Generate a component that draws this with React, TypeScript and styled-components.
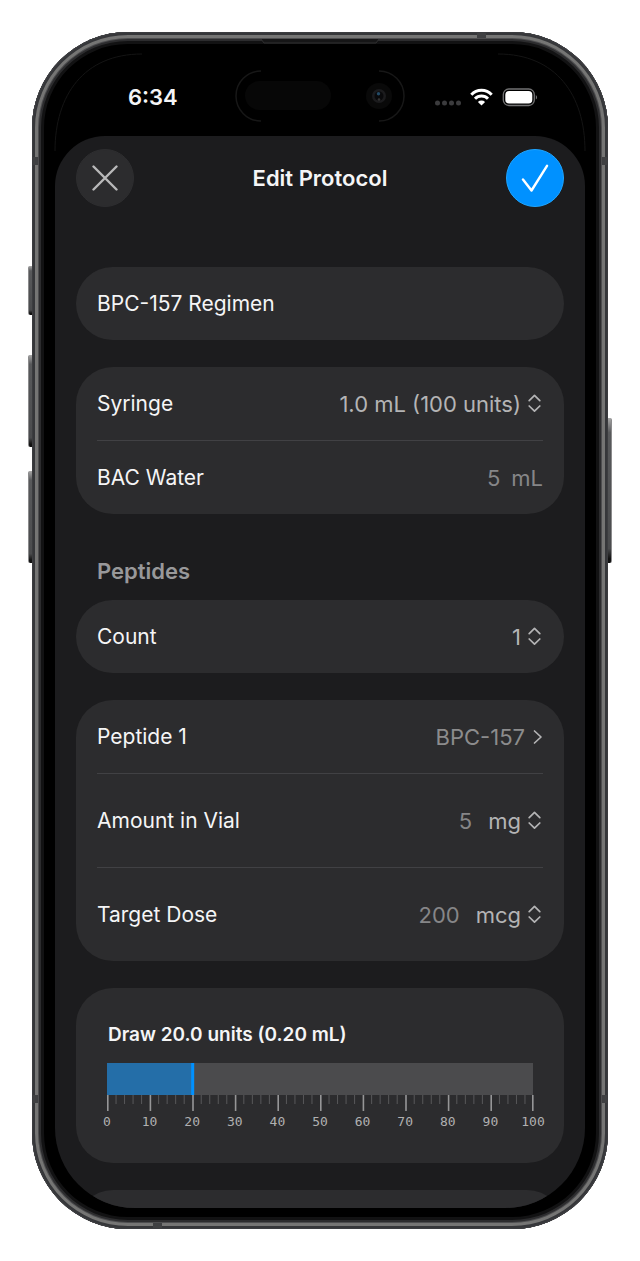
import React from "react";
import styled, { createGlobalStyle } from "styled-components";

const GlobalStyle = createGlobalStyle`
  * { box-sizing: border-box; }
  body {
    margin: 0;
    background: #ffffff;
    font-family: Inter, "Liberation Sans", sans-serif;
    font-size: 22px;
    line-height: 28px;
    color: #f5f5f6;
  }
`;

const Page = styled.div`
  padding: 32px 32px 33px;
`;

const Phone = styled.div`
  position: relative;
  padding: 0 23px 21px;
  background: #000;
  border-radius: 96px;
  box-shadow:
    inset 0 0 0 1px #3c3d40,
    inset 0 0 0 3px #36373a,
    inset 0 0 0 6px #757574,
    inset 0 0 0 7px #4d4d4f,
    inset 0 0 0 9px #2c2c2e,
    inset 0 0 0 12px #121213;
`;

const SideButton = styled.span<{ $side: "left" | "right"; $top: number; $length: number }>`
  position: absolute;
  ${(p) => p.$side}: -4px;
  top: ${(p) => p.$top}px;
  width: 4px;
  height: ${(p) => p.$length}px;
  border-radius: ${(p) => (p.$side === "left" ? "2px 0 0 2px" : "0 2px 2px 0")};
  background: linear-gradient(#a8a8a8, #58595b 10%, #4a4b4d 90%, #111 97%);
  border-${(p) => p.$side}: 1px solid #8b8b8c;
`;

const AntennaBand = styled.span<{ $edge: "left" | "right" | "top" | "bottom"; $at: number }>`
  position: absolute;
  ${(p) => p.$edge}: 1px;
  ${(p) =>
    p.$edge === "left" || p.$edge === "right"
      ? `top: ${p.$at}px; width: 5px; height: 8px;`
      : `left: ${p.$at}px; width: 9px; height: 5px;`}
  background: #3f4042;
`;

const Earpiece = styled.svg`
  position: absolute;
  top: 7px;
  left: 50%;
  transform: translateX(-50%);
`;

const CornerGlint = styled.svg<{ $side: "left" | "right" }>`
  position: absolute;
  top: 21px;
  ${(p) => p.$side}: 22px;
  ${(p) => p.$side === "right" && "transform: scaleX(-1);"}
`;

const StatusBar = styled.header`
  display: grid;
  grid-template-columns: 1fr 170px 1fr;
  align-items: center;
  height: 104px;
  padding: 26px 47px 0;
  column-gap: 28px;
`;

const Time = styled.time`
  padding-left: 26px;
  font-size: 22px;
  font-weight: 600;
`;

const StatusIcons = styled.div`
  display: flex;
  align-items: center;
  justify-content: flex-end;
`;

const Sheet = styled.main`
  overflow: hidden;
  padding: 13px 21px 0;
  background: #1c1c1e;
  border-radius: 50px 50px 80px 80px;
`;

const NavBar = styled.div`
  display: flex;
  align-items: center;
  justify-content: space-between;
  margin-bottom: 60px;
`;

const Title = styled.h1`
  margin: 0;
  font-size: 22px;
  font-weight: 600;
`;

const RoundButton = styled.button<{ $primary?: boolean }>`
  display: flex;
  align-items: center;
  justify-content: center;
  width: 58px;
  height: 58px;
  padding: 0;
  border: 1px solid ${(p) => (p.$primary ? "#1fa5ff" : "#2e2e30")};
  border-radius: 50%;
  background: ${(p) => (p.$primary ? "#0091ff" : "#2c2c2e")};
  color: ${(p) => (p.$primary ? "#fff" : "#b9b9ba")};
`;

const Form = styled.form`
  display: flex;
  flex-direction: column;
  gap: 27px;
`;

const Card = styled.section`
  padding: 0 21px;
  background: #2c2c2e;
  border-radius: 37px;
`;

const Row = styled.div<{ $tall?: boolean }>`
  box-sizing: content-box;
  display: flex;
  align-items: center;
  height: ${(p) => (p.$tall ? 93 : 73)}px;

  &:not(:first-child) {
    border-top: 1px solid #414144;
  }
`;

const Label = styled.label`
  flex: 1;
  font-size: 21px;
`;

const NameInput = styled.input`
  width: 100%;
  padding: 0;
  border: 0;
  background: none;
  color: inherit;
  font: inherit;
  font-size: 21px;
`;

const ValueInput = styled.input<{ $gap: number }>`
  field-sizing: content;
  margin-right: ${(p) => p.$gap}px;
  padding: 0;
  border: 0;
  background: none;
  color: #868688;
  font: inherit;
  text-align: right;
`;

const Unit = styled.span`
  color: #868688;
`;

const Picker = styled.span`
  display: flex;
  align-items: center;
  gap: 7px;
  padding-right: 2px;
  color: #b4b4b5;
`;

const Select = styled.select`
  appearance: none;
  field-sizing: content;
  padding: 0;
  border: 0;
  background: none;
  color: inherit;
  font: inherit;
`;

const DetailLink = styled.a`
  display: flex;
  align-items: center;
  gap: 8px;
  color: #8c8c8d;
  text-decoration: none;
`;

const Group = styled.div`
  padding-top: 16px;
`;

const GroupTitle = styled.h2`
  margin: 0 21px 15px;
  font-size: 22px;
  line-height: 28px;
  font-weight: 600;
  color: #98989a;
`;

const DrawCard = styled(Card)`
  padding: 33px 31px 31px;
`;

const DrawTitle = styled.h3`
  margin: 0 1px 14px;
  font-size: 19px;
  line-height: 28px;
  font-weight: 600;
`;

const Gauge = styled.svg`
  display: block;
  width: 100%;
  height: 69px;
  overflow: visible;
`;

const TickText = styled.text`
  fill: #b0b0b1;
  font-family: "DejaVu Sans Mono", monospace;
  font-size: 13px;
  text-anchor: middle;
`;

const NextCardPeek = styled.div`
  height: 18px;
  overflow: hidden;
`;

const NextCard = styled(Card)`
  height: 74px;
`;

const UpDown = () => (
  <svg width="13" height="20" viewBox="0 0 13 20" fill="none" stroke="currentColor" strokeWidth="1.7" strokeLinecap="round" strokeLinejoin="round" aria-hidden="true">
    <path d="M1.2 6.6 6.5 1.4l5.300 5.200M1.200 12l5.300 5.200 5.300-5.200" />
  </svg>
);

type PickerFieldProps = { id: string; label: string; options: string[] };

const PickerField = ({ id, label, options }: PickerFieldProps) => (
  <Picker>
    <Select id={id} aria-label={label} defaultValue={options[0]}>
      {options.map((o) => (
        <option key={o}>{o}</option>
      ))}
    </Select>
    <UpDown />
  </Picker>
);

const SyringeGauge = ({ units }: { units: number }) => {
  const ticks = Array.from({ length: 51 }, (_, i) => i * 2);
  return (
    <Gauge role="img" aria-label={`${units} of 100 units`}>
      <rect width="100%" height="32" fill="#4b4b4d" />
      <rect width={`${units}%`} height="32" fill="#246ea8" />
      {ticks.map((t) => (
        <rect
          key={t}
          x={`${t}%`}
          y="32"
          width={t % 10 === 0 ? 1.6 : 1}
          height={t % 10 === 0 ? 16 : 9}
          fill={t % 10 === 0 ? "#969697" : "#58585a"}
          transform={t === 100 ? "translate(-1 0)" : undefined}
        />
      ))}
      <rect x={`${units}%`} width="3" height="32" fill="#0091ff" transform="translate(-1 0)" />
      {ticks
        .filter((t) => t % 10 === 0)
        .map((t) => (
          <TickText key={t} x={`${t}%`} y="63">
            {t}
          </TickText>
        ))}
    </Gauge>
  );
};

const Island = () => (
  <svg width="170" height="54" viewBox="0 0 170 54" fill="none" aria-hidden="true">
    <path d="M26 1a25 25 0 0 0 0 50M144 1a25 25 0 0 1 0 50" stroke="#171717" strokeWidth="1.500" />
    <rect x="10" y="11" width="86" height="29" rx="14.500" fill="#070707" />
    <circle cx="144" cy="26" r="13" fill="#090909" />
    <circle cx="144" cy="26" r="7" fill="#1b1b1d" />
    <circle cx="144" cy="26" r="4.500" fill="#09090b" />
    <circle cx="143.500" cy="23.800" r="1.700" fill="#234a66" />
    <circle cx="144" cy="29.500" r="1.300" fill="#333" />
  </svg>
);

const StatusGlyphs = () => (
  <svg width="104" height="20" viewBox="0 0 104 20" aria-hidden="true">
    <g fill="#3b3b3d">
      <circle cx="3.500" cy="16" r="2.500" />
      <circle cx="10.500" cy="16" r="2.500" />
      <circle cx="17.500" cy="16" r="2.500" />
      <circle cx="24.500" cy="16" r="2.500" />
    </g>
    <g fill="none" stroke="#fff" strokeWidth="3">
      <path d="M37.300 7.700a14 14 0 0 1 20.400 0" />
      <path d="M41 11.700a9 9 0 0 1 13 0" />
    </g>
    <path d="M47.500 18.500 43.900 14.900a5.100 5.100 0 0 1 7.200 0z" fill="#fff" />
    <rect x="69.300" y="2" width="31" height="16.500" rx="5.500" fill="none" stroke="#727273" strokeWidth="1.300" />
    <rect x="71.300" y="4" width="27" height="12.500" rx="3.800" fill="#fff" />
    <path d="M101.800 8v4.600c1.700-.8 1.700-3.800 0-4.600z" fill="#727273" />
  </svg>
);

export default function App() {
  return (
    <>
      <GlobalStyle />
      <Page>
        <Phone>
          <SideButton $side="left" $top={234} $length={49} />
          <SideButton $side="left" $top={323} $length={92} />
          <SideButton $side="left" $top={439} $length={92} />
          <SideButton $side="right" $top={386} $length={145} />
          <AntennaBand $edge="left" $at={125} />
          <AntennaBand $edge="right" $at={125} />
          <AntennaBand $edge="left" $at={1063} />
          <AntennaBand $edge="right" $at={1063} />
          <AntennaBand $edge="top" $at={445} />
          <AntennaBand $edge="bottom" $at={121} />
          <Earpiece width="118" height="5" viewBox="0 0 118 5" aria-hidden="true">
            <path d="M0 0h118l-3 4H3z" fill="#161617" />
            <path d="M0 0l3 4h112l3-4" fill="none" stroke="#303032" />
          </Earpiece>
          <CornerGlint $side="left" width="92" height="100" fill="none" aria-hidden="true">
            <path d="M1 98C1 42 30 1 88 1" stroke="#141414" />
          </CornerGlint>
          <CornerGlint $side="right" width="92" height="100" fill="none" aria-hidden="true">
            <path d="M1 98C1 42 30 1 88 1" stroke="#141414" />
          </CornerGlint>

          <StatusBar>
            <Time>6:34</Time>
            <Island />
            <StatusIcons>
              <StatusGlyphs />
            </StatusIcons>
          </StatusBar>

          <Sheet>
            <NavBar>
              <RoundButton type="button" aria-label="Close">
                <svg width="26" height="26" viewBox="0 0 26 26" stroke="currentColor" strokeWidth="2.400" strokeLinecap="round" aria-hidden="true">
                  <path d="M1.500 1.500l23 23M24.500 1.500l-23 23" />
                </svg>
              </RoundButton>
              <Title>Edit Protocol</Title>
              <RoundButton type="submit" form="protocol" $primary aria-label="Save">
                <svg width="28" height="28" viewBox="0 0 28 28" fill="none" stroke="currentColor" strokeWidth="2.400" strokeLinecap="round" strokeLinejoin="round" aria-hidden="true">
                  <path d="M2 15.500 10.500 26.500 26 1.800" />
                </svg>
              </RoundButton>
            </NavBar>

            <Form id="protocol">
              <Card>
                <Row>
                  <NameInput aria-label="Protocol name" defaultValue="BPC-157 Regimen" />
                </Row>
              </Card>

              <Card>
                <Row>
                  <Label htmlFor="syringe">Syringe</Label>
                  <PickerField id="syringe" label="Syringe" options={["1.0 mL (100 units)"]} />
                </Row>
                <Row>
                  <Label htmlFor="water">BAC Water</Label>
                  <ValueInput id="water" $gap={11} defaultValue="5" />
                  <Unit>mL</Unit>
                </Row>
              </Card>

              <Group>
                <GroupTitle>Peptides</GroupTitle>
                <Card>
                  <Row>
                    <Label htmlFor="count">Count</Label>
                    <PickerField id="count" label="Count" options={["1"]} />
                  </Row>
                </Card>
              </Group>

              <Card>
                <Row>
                  <Label as="span">Peptide 1</Label>
                  <DetailLink href="#peptide">
                    BPC-157
                    <svg width="10" height="16" viewBox="0 0 10 16" fill="none" stroke="#b4b4b5" strokeWidth="1.700" strokeLinecap="round" strokeLinejoin="round" aria-hidden="true">
                      <path d="M1.500 2 8 8l-6.500 6" />
                    </svg>
                  </DetailLink>
                </Row>
                <Row $tall>
                  <Label htmlFor="amount">Amount in Vial</Label>
                  <ValueInput id="amount" $gap={16} defaultValue="5" />
                  <PickerField id="amount-unit" label="Amount unit" options={["mg"]} />
                </Row>
                <Row $tall>
                  <Label htmlFor="dose">Target Dose</Label>
                  <ValueInput id="dose" $gap={16} defaultValue="200" />
                  <PickerField id="dose-unit" label="Dose unit" options={["mcg"]} />
                </Row>
              </Card>

              <DrawCard>
                <DrawTitle>Draw 20.0 units (0.20 mL)</DrawTitle>
                <SyringeGauge units={20} />
              </DrawCard>

              <NextCardPeek>
                <NextCard />
              </NextCardPeek>
            </Form>
          </Sheet>
        </Phone>
      </Page>
    </>
  );
}
